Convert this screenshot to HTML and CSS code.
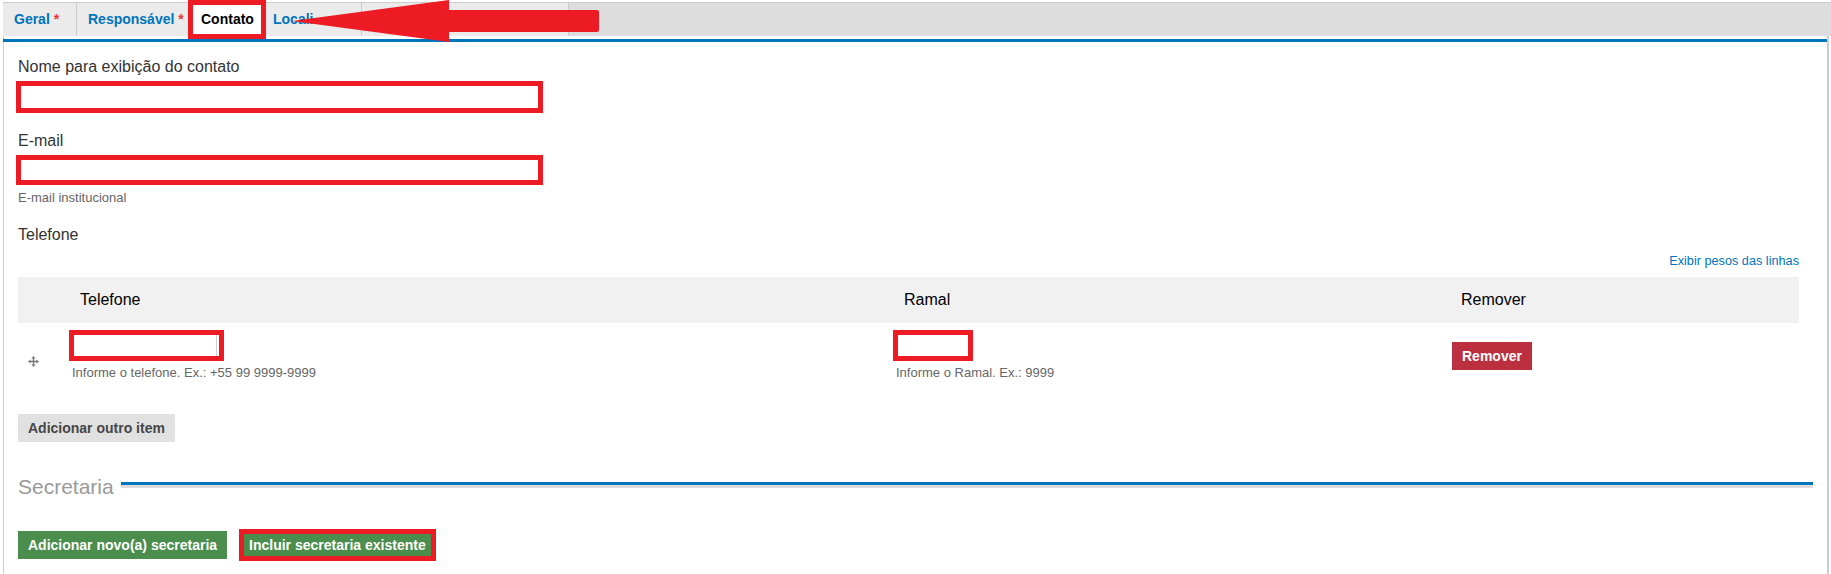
FILE: index.html
```html
<!DOCTYPE html>
<html lang="pt-BR">
<head>
<meta charset="utf-8">
<title>Contato</title>
<link rel="stylesheet" href="styles.css">
</head>
<body>
<div class="page">
  <nav class="tabs">
    <a class="tab tab-geral">Geral <span class="req">*</span></a>
    <a class="tab tab-resp">Responsável <span class="req">*</span></a>
    <a class="tab tab-active hl-outline">Contato</a>
    <a class="tab tab-local"><span class="tab-clip">Localização</span></a>
    <a class="tab tab-extra">Dados complementares</a>
  </nav>
  <svg class="arrow" width="312" height="44" viewBox="0 0 312 44" aria-hidden="true">
    <path d="M2 21 L159 0 L159 10 L307 10 Q309 10 309 12 L309 30 Q309 32 307 32 L159 32 L159 42 Z" fill="#ed1c24"/>
  </svg>

  <section class="panel">
    <div class="panel-bar"></div>
    <div class="content">
      <div class="field field-first">
        <label class="label">Nome para exibição do contato</label>
        <div class="box box-wide box-nome"></div>
      </div>

      <div class="field field-email">
        <label class="label">E-mail</label>
        <div class="box box-wide box-email"></div>
        <div class="desc desc-email">E-mail institucional</div>
      </div>

      <div class="field field-tel">
        <div class="label">Telefone</div>
        <div class="weights"><a>Exibir pesos das linhas</a></div>
        <div class="table">
          <div class="thead">
            <div class="th"></div>
            <div class="th">Telefone</div>
            <div class="th">Ramal</div>
            <div class="th">Remover</div>
          </div>
          <div class="trow">
            <div class="td td-drag">
              <svg width="11" height="11" viewBox="0 0 13 13" aria-hidden="true">
                <path d="M6.5 0 L9 3 H7.3 V5.7 H10 V4 L13 6.5 L10 9 V7.3 H7.3 V10 H9 L6.5 13 L4 10 H5.7 V7.3 H3 V9 L0 6.5 L3 4 V5.7 H5.7 V3 H4 Z" fill="#7a7a7a"/>
              </svg>
            </div>
            <div class="td">
              <div class="box box-phone"></div>
              <div class="desc">Informe o telefone. Ex.: +55 99 9999-9999</div>
            </div>
            <div class="td">
              <div class="box box-ramal"></div>
              <div class="desc">Informe o Ramal. Ex.: 9999</div>
            </div>
            <div class="td td-remove">
              <button class="btn btn-danger">Remover</button>
            </div>
          </div>
        </div>
        <button class="btn btn-gray">Adicionar outro item</button>
      </div>

      <div class="legend">
        <span class="legend-text">Secretaria</span>
        <span class="legend-line"></span>
      </div>

      <div class="actions">
        <button class="btn btn-green">Adicionar novo(a) secretaria</button>
        <button class="btn btn-green btn-narrow hl-outline-btn">Incluir secretaria existente</button>
      </div>
    </div>
  </section>
</div>
</body>
</html>
```

FILE: styles.css
```css
* {
  box-sizing: border-box;
}

html, body {
  margin: 0;
  padding: 0;
  background: #fff;
}

body {
  font-family: "Liberation Sans", Arial, sans-serif;
  color: #333;
  height: 574px;
  overflow: hidden;
}

.page {
  position: relative;
  padding: 2px 0 0 3px;
}

/* Tabs */
.tabs {
  display: flex;
  height: 34px;
  background: #dddddd;
  border-top: 1px solid #cccccc;
}

.tab {
  display: block;
  height: 33px;
  line-height: 33px;
  padding-left: 11px;
  background: #ebebeb;
  border-right: 1px solid #cccccc;
  font-size: 14px;
  font-weight: bold;
  color: #0074bd;
  white-space: nowrap;
  overflow: hidden;
}

.req {
  color: #e5383b;
  font-weight: bold;
}

.tab-geral { width: 74px; }
.tab-resp { width: 114px; }
.tab-local { width: 99px; padding-left: 10px; }
.tab-extra { width: 207px; }

.tab-clip {
  display: inline-block;
  width: 41px;
  overflow: hidden;
  vertical-align: top;
}

.tab-active {
  width: 72px;
  padding-left: 10px;
  background: #fff;
  color: #000;
  border-right: none;
}

.hl-outline {
  outline: 5px solid #ed1c24;
  outline-offset: -2px;
  position: relative;
  z-index: 1;
}

.arrow {
  position: absolute;
  left: 290px;
  top: 0;
  z-index: 2;
}

/* Panel */
.panel {
  margin-right: 2px;
  border-left: 1px solid #cccccc;
  border-right: 2px solid #cccccc;
  padding-top: 3px;
  height: 540px;
}

.panel-bar {
  height: 3px;
  background: #0074bd;
  margin-left: -1px;
}

.content {
  padding: 0 28px 0 14px;
}

.label {
  display: block;
  font-size: 16px;
  line-height: 19px;
  color: #333;
}

.field-first {
  padding-top: 15px;
}

.field-email {
  margin-top: 18px;
}

.field-tel {
  margin-top: 20px;
}

.box {
  border: 5px solid #ed1c24;
  background: #fff;
  margin-top: 5px;
}

.box-wide {
  width: 527px;
  margin-left: -2px;
}

.box-nome { height: 32px; }
.box-email { height: 30px; }

.desc {
  font-size: 13px;
  line-height: 15px;
  color: #666;
  margin-top: 4px;
}

.desc-email {
  margin-top: 5px;
}

.weights {
  text-align: right;
  font-size: 12.7px;
  line-height: 16px;
  margin-top: 9px;
}

.weights a {
  color: #0074bd;
}

/* Table */
.table {
  margin-top: 8px;
}

.thead,
.trow {
  display: grid;
  grid-template-columns: 51px 824px 557px 1fr;
}

.thead {
  background: #f1f1f1;
  height: 46px;
}

.th {
  font-size: 16px;
  line-height: 46px;
  color: #000;
  padding-left: 11px;
}

.trow {
  padding: 7px 0 14px;
  align-items: center;
}

.td {
  align-self: start;
}

.td-drag {
  align-self: center;
  padding: 12px 0 0 10px;
}

.td-drag svg {
  display: block;
}

.td-remove {
  align-self: center;
  padding-left: 2px;
  padding-top: 2px;
}

.box-phone {
  width: 155px;
  height: 31px;
  margin-top: 0;
  box-shadow: inset -2px 0 0 #fff, inset -3px 0 0 #d0d0d0;
}

.box-ramal {
  width: 80px;
  height: 31px;
  margin-top: 0;
}

.td .desc {
  margin-left: 3px;
}

/* Buttons */
.btn {
  display: inline-block;
  border: none;
  font-family: "Liberation Sans", Arial, sans-serif;
  font-size: 14px;
  font-weight: bold;
  line-height: 18px;
  height: 28px;
  padding: 5px 10px;
  cursor: pointer;
}

.btn-danger {
  background: #bc2f3e;
  color: #fff;
}

.btn-gray {
  background: #e1e1e1;
  color: #464646;
  margin-top: 20px;
  padding: 5px 10px;
}

.btn-green {
  background: #4a8d4c;
  color: #fff;
  padding: 5px 10px;
}

.btn-narrow {
  padding: 5px 8px;
}

.hl-outline-btn {
  outline: 5px solid #ed1c24;
  outline-offset: -3px;
}

/* Legend */
.legend {
  display: flex;
  align-items: flex-start;
  margin-top: 33px;
  margin-right: -14px;
}

.legend-text {
  font-size: 21px;
  line-height: 24px;
  color: #9a9a9a;
  white-space: nowrap;
}

.legend-line {
  flex: 1;
  margin-left: 7px;
  margin-top: 7px;
  height: 6px;
  border-top: 3px solid #0074bd;
  border-bottom: 3px solid #dcdcdc;
}

.actions {
  display: flex;
  gap: 14px;
  margin-top: 32px;
}
```
